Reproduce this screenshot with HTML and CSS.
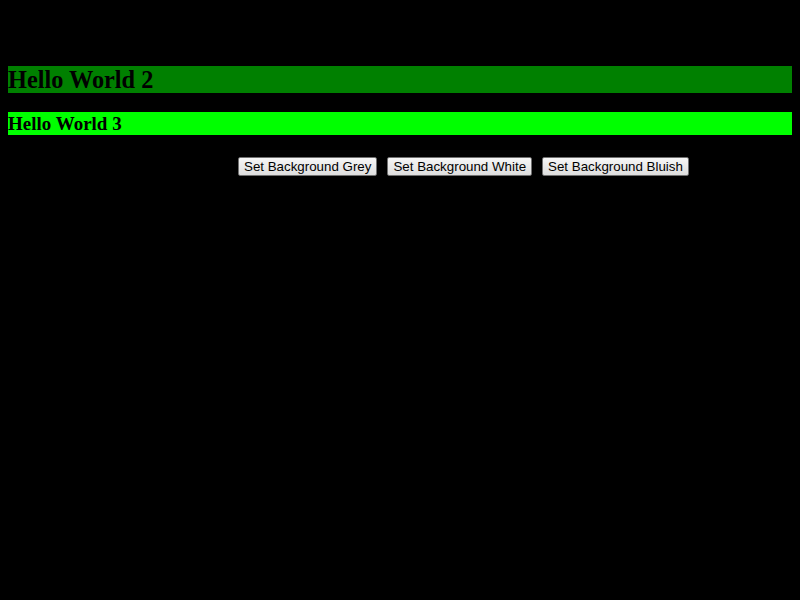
FILE: index.html
```html
<!DOCTYPE html>
<html>
<head>
<meta charset="utf-8">
<title>Hello World</title>
<link rel="stylesheet" href="styles.css">
</head>
<body>
<h1 class="title">Hello World</h1>
<h2 class="h2">Hello World 2</h2>
<h3 class="h3">Hello World 3</h3>
<div class="controls">
  <button class="btn">Set Background Grey</button>
  <button class="btn">Set Background White</button>
  <button class="btn">Set Background Bluish</button>
</div>
</body>
</html>
```
FILE: styles.css
```css
html, body {
  background: #000;
}
body {
  margin: 8px;
  font-family: "Liberation Serif", "Times New Roman", serif;
  color: #000;
}
.title {
  margin: 0;
  height: 38px;
  font-size: 32px;
  line-height: 38px;
  color: #000;
}
.h2 {
  margin: 20px 0 19px;
  height: 27px;
  font-size: 24.3px;
  line-height: 27px;
  font-weight: bold;
  background: #008000;
  color: #000;
}
.h3 {
  margin: 0;
  height: 23px;
  font-size: 19px;
  line-height: 23px;
  font-weight: bold;
  background: #00ff00;
  color: #000;
}
.controls {
  display: flex;
  gap: 10px;
  margin-top: 22px;
  padding-left: 230px;
}
.btn {
  height: 19px;
  padding: 0 5px;
  font-family: "Liberation Sans", Arial, sans-serif;
  font-size: 13.33px;
  line-height: 17px;
  color: #000;
  background: linear-gradient(#f6f6f6, #dedede);
  border: 1px solid #707070;
  border-radius: 2px;
  box-sizing: border-box;
}
```
